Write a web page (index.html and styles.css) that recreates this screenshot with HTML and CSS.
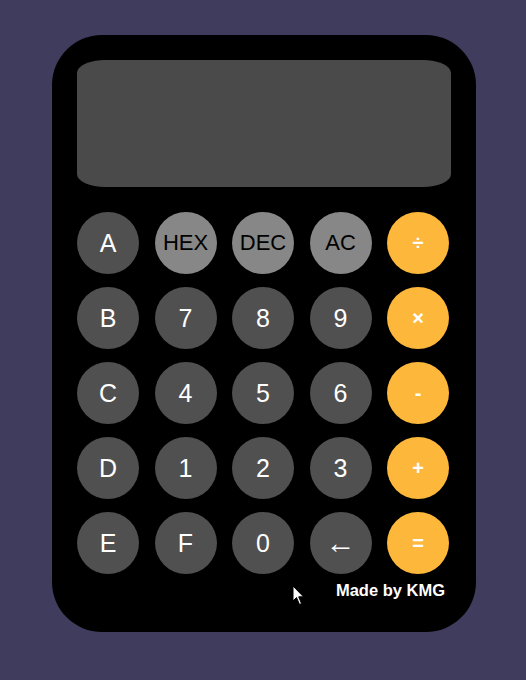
FILE: index.html
```html
<!DOCTYPE html>
<html>
<head>
<meta charset="utf-8">
<link rel="stylesheet" href="styles.css">
</head>
<body>
<div class="calc">
  <div class="display"></div>
  <div class="keys">
    <button class="key dark">A</button>
    <button class="key gray">HEX</button>
    <button class="key gray">DEC</button>
    <button class="key gray">AC</button>
    <button class="key op">÷</button>

    <button class="key dark">B</button>
    <button class="key dark">7</button>
    <button class="key dark">8</button>
    <button class="key dark">9</button>
    <button class="key op">×</button>

    <button class="key dark">C</button>
    <button class="key dark">4</button>
    <button class="key dark">5</button>
    <button class="key dark">6</button>
    <button class="key op">-</button>

    <button class="key dark">D</button>
    <button class="key dark">1</button>
    <button class="key dark">2</button>
    <button class="key dark">3</button>
    <button class="key op">+</button>

    <button class="key dark">E</button>
    <button class="key dark">F</button>
    <button class="key dark">0</button>
    <button class="key dark arrow">←</button>
    <button class="key op">=</button>
  </div>
  <div class="credit">Made by KMG</div>
  <svg class="cursor" width="14" height="22" viewBox="0 0 14 22"><path d="M1 1 L1 16 L4.5 12.5 L7.5 19.5 L9.5 18.5 L6.7 11.8 L11.5 11.8 Z" fill="#fff" stroke="#000" stroke-width="1"/></svg>
</div>
</body>
</html>
```
FILE: styles.css
```css
* { box-sizing: border-box; }
html, body { margin: 0; padding: 0; }
body {
  background: #3f3c5d;
  width: 526px;
  height: 680px;
  font-family: "Liberation Sans", Arial, sans-serif;
  padding-top: 35px;
}
.calc {
  position: relative;
  width: 424px;
  height: 597px;
  margin-left: 52px;
  background: #000;
  border-radius: 50px;
  padding: 25px 25px 0 25px;
}
.display {
  width: 374px;
  height: 127px;
  background: #4a4a4a;
  border-radius: 28px / 13px;
}
.keys {
  margin-top: 25px;
  display: grid;
  grid-template-columns: repeat(5, 62px);
  grid-auto-rows: 62px;
  column-gap: 15.5px;
  row-gap: 13px;
}
.key {
  width: 62px;
  height: 62px;
  border-radius: 50%;
  border: none;
  padding: 0;
  font-family: "Liberation Sans", Arial, sans-serif;
  font-size: 25px;
  color: #fff;
  display: flex;
  align-items: center;
  justify-content: center;
}
.dark { background: #505050; }
.gray { background: #878787; color: #000; font-size: 22px; }
.op { background: #fdb83c; font-size: 20px; color: #fff; font-weight: bold; }
.arrow { font-size: 30px; }
.credit {
  margin-top: 7px;
  text-align: right;
  padding-right: 6px;
  color: #fff;
  font-weight: bold;
  font-size: 16.5px;
}
.cursor {
  position: absolute;
  left: 240px;
  top: 550px;
}
```
